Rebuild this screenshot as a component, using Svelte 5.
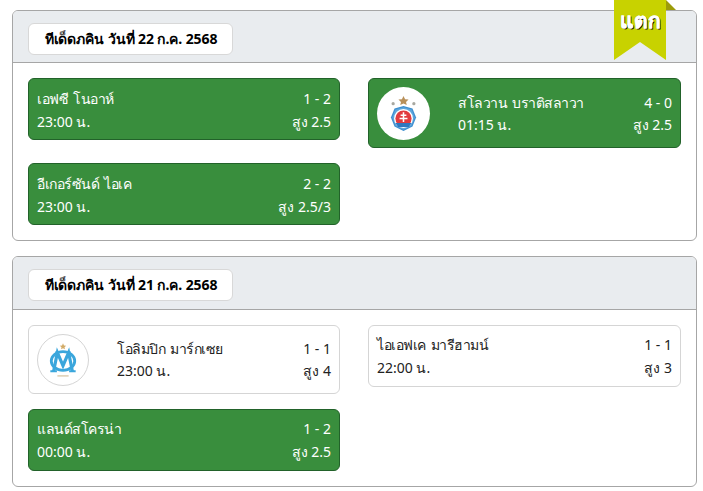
<script>
  const days = [
    {
      title: 'ทีเด็ดภคิน วันที่ 22 ก.ค. 2568',
      ribbon: true,
      rows: [
        { name: 'เอฟซี โนอาห์', time: '23:00 น.', score: '1 - 2', tip: 'สูง 2.5', win: true },
        { name: 'สโลวาน บราติสลาวา', time: '01:15 น.', score: '4 - 0', tip: 'สูง 2.5', win: true, logo: 'slovan' },
        { name: 'อีเกอร์ซันด์ ไอเค', time: '23:00 น.', score: '2 - 2', tip: 'สูง 2.5/3', win: true }
      ]
    },
    {
      title: 'ทีเด็ดภคิน วันที่ 21 ก.ค. 2568',
      rows: [
        { name: 'โอลิมปิก มาร์กเซย', time: '23:00 น.', score: '1 - 1', tip: 'สูง 4', logo: 'om' },
        { name: 'ไอเอฟเค มารีฮามน์', time: '22:00 น.', score: '1 - 1', tip: 'สูง 3' },
        { name: 'แลนด์สโครน่า', time: '00:00 น.', score: '1 - 2', tip: 'สูง 2.5', win: true }
      ]
    }
  ];
</script>

<main class="page">
  {#each days as day}
    <section class="card">
      <header class="head">
        <div class="pill">{day.title}</div>
        {#if day.ribbon}
          <div class="ribbon">
            <svg class="ribbon-bg" width="62" height="60" viewBox="0 0 62 60" aria-hidden="true">
              <polygon points="52,0 62,10 52,10" fill="#9c9c0a" />
              <polygon points="0,0 52,0 52,60 26,42 0,60" fill="#c8d200" />
            </svg>
            <span class="ribbon-text">แตก</span>
          </div>
        {/if}
      </header>
      <div class="grid">
        {#each day.rows as r}
          <article class="row" class:win={r.win} class:with-logo={r.logo}>
            {#if r.logo === 'slovan'}
              <div class="logo logo-slovan">
                <svg width="31" height="36" viewBox="0 0 34 40" aria-hidden="true">
                  <polygon points="17,0 18.8,3.6 22.6,4 19.8,6.6 20.6,10 17,8.2 13.4,10 14.2,6.6 11.4,4 15.2,3.6" fill="#b8905a" />
                  <circle cx="5.5" cy="8.5" r="1.8" fill="#a8a8a0" />
                  <circle cx="28.5" cy="8.5" r="1.8" fill="#a8a8a0" />
                  <polygon points="17,11 27,14 31,24 27,34 17,39 7,34 3,24 7,14" fill="#3d8fd0" />
                  <polygon points="17,12.5 26,15 29.5,24 26,33 17,37.5 8,33 4.5,24 8,15" fill="#5da5dc" />
                  <circle cx="17" cy="25" r="10.5" fill="#fff" />
                  <circle cx="17" cy="25" r="9" fill="#e23b3f" />
                  <path d="M8 30h18l-3 4.5H11z" fill="#2f78c0" />
                  <path d="M17 18v11M13.8 21.5h6.4M12.6 25h8.8" stroke="#fff" stroke-width="1.7" fill="none" />
                </svg>
              </div>
            {:else if r.logo === 'om'}
              <div class="logo logo-om">
                <svg width="30" height="36" viewBox="0 0 32 38" aria-hidden="true">
                  <polygon points="16,1 17,3.4 19.4,3.7 17.6,5.3 18.1,7.6 16,6.4 13.9,7.6 14.4,5.3 12.6,3.7 15,3.4" fill="#d2ab67" />
                  <ellipse cx="16" cy="20" rx="12.5" ry="10" fill="none" stroke="#3aa6dc" stroke-width="3" />
                  <path d="M6 31 10 11l6 14 6-14 4 20" fill="none" stroke="#3aa6dc" stroke-width="3.4" />
                  <path d="M2.5 31h7M22.5 31h7M8 10.5h4M20 10.5h4" fill="none" stroke="#3aa6dc" stroke-width="2" />
                  <rect x="10" y="35.5" width="12" height="1" fill="#c9b184" />
                </svg>
              </div>
            {/if}
            <div class="info">
              <div class="line"><span class="name">{r.name}</span><span>{r.score}</span></div>
              <div class="line"><span>{r.time}</span><span>{r.tip}</span></div>
            </div>
          </article>
        {/each}
      </div>
    </section>
  {/each}
</main>

<style>
  :global(body) {
    margin: 0;
    background: #fff;
    font-family: "Noto Sans", "Open Sans", "DejaVu Sans", sans-serif;
  }
  .page {
    padding: 10px 6px 0 12px;
    display: flex;
    flex-direction: column;
    gap: 15px;
  }
  .card {
    border: 1px solid #a6a6a6;
    border-radius: 6px;
    background: #fff;
  }
  .head {
    position: relative;
    background: #e9ecef;
    border-bottom: 1px solid #a6a6a6;
    border-radius: 5px 5px 0 0;
    padding: 12px 15px 7.3px;
  }
  .pill {
    width: 205px;
    height: 32px;
    box-sizing: border-box;
    background: #fff;
    border: 1px solid #d8d8d8;
    border-radius: 6px;
    padding-left: 1px;
    font-size: 14px;
    font-weight: 700;
    line-height: 30px;
    letter-spacing: -0.07px;
    text-align: center;
    color: #000;
  }
  .ribbon {
    position: absolute;
    top: -11px;
    left: 601px;
    width: 62px;
    height: 60px;
  }
  .ribbon-bg {
    display: block;
  }
  .ribbon-text {
    position: absolute;
    top: 7px;
    left: 0;
    width: 52px;
    text-align: center;
    color: #fff;
    font-size: 21px;
    font-weight: 700;
    line-height: 26px;
    -webkit-text-stroke: 0.3px #fff;
    text-shadow: 1px 1px 0 #111;
  }
  .grid {
    display: grid;
    grid-template-columns: 312px 313px;
    column-gap: 28px;
    row-gap: 15px;
    align-items: start;
    padding: 15px;
  }
  .row {
    display: flex;
    align-items: center;
    box-sizing: border-box;
    border: 1px solid #d5d5d5;
    border-radius: 6px;
    background: #fff;
    color: #222;
    padding: 7.5px 8px 6.5px;
    font-size: 14px;
    line-height: 23px;
  }
  .row.win {
    background: #398e3d;
    border-color: #22622a;
    color: #fff;
  }
  .row.with-logo {
    padding: 8px 8px 7px;
    gap: 28px;
    line-height: 22px;
  }
  .with-logo .info {
    padding-top: 1px;
  }
  .logo {
    flex: none;
    box-sizing: border-box;
    border-radius: 50%;
    background: #fff;
    display: flex;
    align-items: center;
    justify-content: center;
  }
  .logo-slovan {
    width: 53px;
    height: 53px;
  }
  .logo-om {
    width: 52px;
    height: 52px;
    border: 1px solid #d5d5d5;
  }
  .info {
    flex: 1;
    min-width: 0;
  }
  .line {
    display: flex;
    justify-content: space-between;
  }
  .name {
    letter-spacing: -0.5px;
    word-spacing: 2px;
  }
</style>
